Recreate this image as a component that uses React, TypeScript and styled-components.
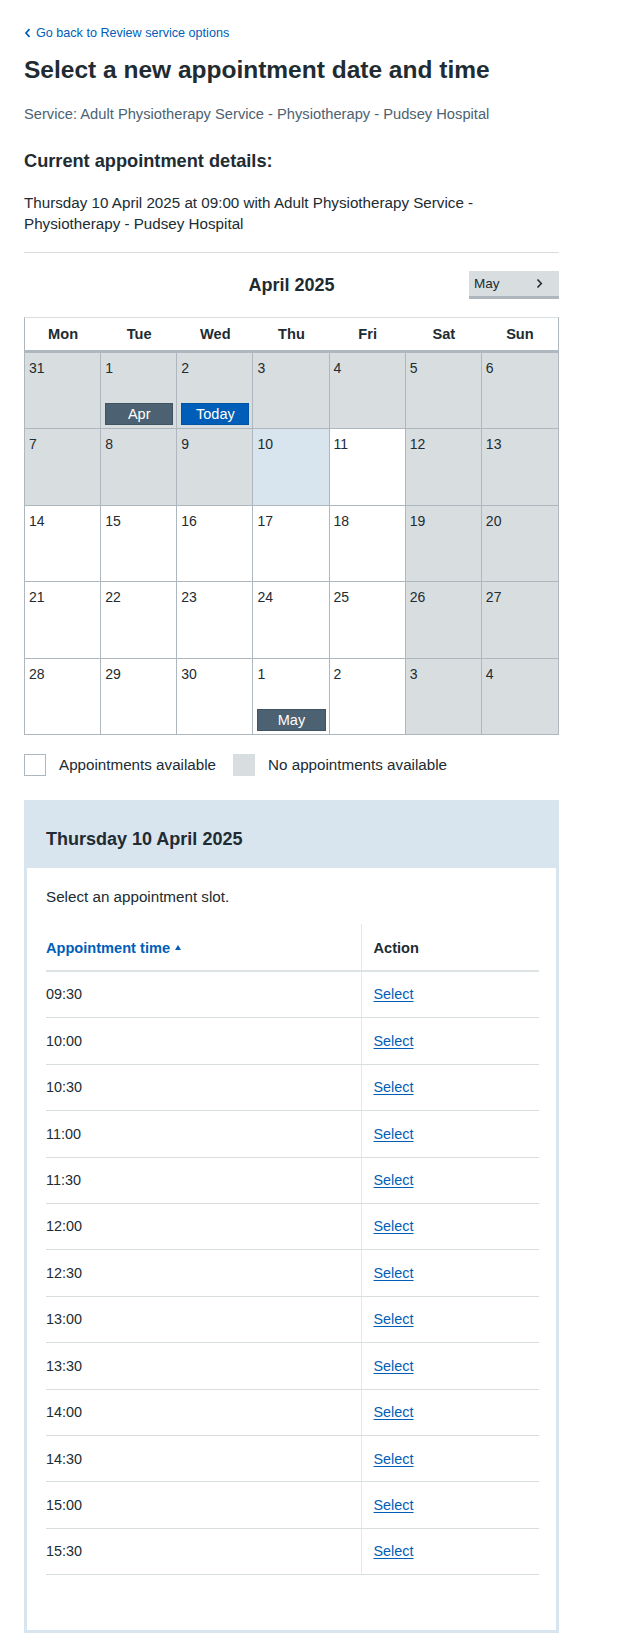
import React from 'react'
import styled, { createGlobalStyle } from 'styled-components'

const GlobalStyle = createGlobalStyle`
	* {
		box-sizing: border-box;
	}

	html,
	body {
		margin: 0;
		padding: 0;
		background: #fff;
	}

	body {
		font-family: 'Liberation Sans', Arial, sans-serif;
		color: #212b32;
	}
`

const Page = styled.main`
	padding: 23px 24px 40px;
`

const Content = styled.div`
	max-width: 535px;
`

const BackLink = styled.a`
	display: inline-flex;
	align-items: center;
	gap: 4px;
	font-size: 12.6px;
	line-height: 20px;
	color: #005eb8;
	text-decoration: none;

	svg {
		display: block;
	}
`

const Title = styled.h1`
	margin: 11px 0 0;
	font-size: 24.5px;
	line-height: 32px;
	font-weight: 700;
`

const ServiceText = styled.p`
	margin: 17px 0 0;
	font-size: 14.7px;
	line-height: 22px;
	color: #4c6272;
`

const SubHeading = styled.h2`
	margin: 23px 0 0;
	font-size: 18.2px;
	line-height: 26px;
	font-weight: 700;
`

const Details = styled.p`
	margin: 17.5px 0 0;
	font-size: 15.2px;
	line-height: 21px;
`

const Divider = styled.hr`
	margin: 18.5px 0 0;
	border: 0;
	border-top: 1px solid #d8dde0;
`

const MonthNav = styled.div`
	margin-top: 18px;
	display: grid;
	grid-template-columns: 1fr auto 1fr;
	align-items: center;
	height: 28px;
`

const MonthTitle = styled.h2`
	grid-column: 2;
	margin: 0;
	font-size: 18px;
	line-height: 24px;
	font-weight: 700;
`

const MonthButton = styled.button`
	grid-column: 3;
	justify-self: end;
	width: 90px;
	height: 28px;
	display: flex;
	align-items: center;
	justify-content: space-between;
	padding: 0 16px 0 5px;
	border: 0;
	border-bottom: 3px solid #aeb7bd;
	background: #d8dde0;
	font-family: inherit;
	font-size: 13.5px;
	color: #212b32;
	cursor: pointer;
`

const CalendarGrid = styled.div`
	margin-top: 18px;
	display: grid;
	grid-template-columns: repeat(7, 1fr);
	border: 1px solid #aeb7bd;
	border-top-color: #d8dde0;
	border-bottom: 0;
`

const DayName = styled.div`
	height: 35px;
	display: flex;
	align-items: center;
	justify-content: center;
	border-bottom: 3px solid #aeb7bd;
	font-size: 14.6px;
	font-weight: 700;
`

type CellKind = 'closed' | 'open' | 'selected'

const cellColours: Record<CellKind, string> = {
	closed: '#d8dde0',
	open: '#ffffff',
	selected: '#d8e4ee',
}

const DayCell = styled.div<{ $kind: CellKind; $lastCol: boolean }>`
	height: 76.4px;
	display: flex;
	flex-direction: column;
	padding: 5px 3px 3px 4px;
	background: ${(p) => cellColours[p.$kind]};
	border-bottom: 1px solid #aeb7bd;
	border-right: ${(p) => (p.$lastCol ? '0' : '1px solid #aeb7bd')};
	font-size: 14px;
	line-height: 20px;
`

const Badge = styled.span<{ $today?: boolean }>`
	margin-top: auto;
	height: 22px;
	border: 1px solid ${(p) => (p.$today ? '#0052a3' : '#3f5361')};
	background: ${(p) => (p.$today ? '#005eb8' : '#4c6272')};
	color: #fff;
	font-size: 14.5px;
	line-height: 20px;
	text-align: center;
`

const Legend = styled.div`
	margin-top: 19px;
	display: flex;
	align-items: center;
	gap: 17px;
`

const LegendItem = styled.div`
	display: flex;
	align-items: center;
	gap: 13px;
	font-size: 15.2px;
	line-height: 22px;
`

const Swatch = styled.span<{ $grey?: boolean }>`
	width: 22px;
	height: 22px;
	border: 1px solid ${(p) => (p.$grey ? '#d8dde0' : '#aeb7bd')};
	background: ${(p) => (p.$grey ? '#d8dde0' : '#fff')};
`

const Panel = styled.section`
	margin-top: 24px;
	border: 3px solid #d8e4ee;
`

const PanelHeader = styled.div`
	background: #d8e4ee;
	padding: 24px 16px 17px 19px;
`

const PanelTitle = styled.h3`
	margin: 0;
	font-size: 18px;
	line-height: 24px;
	font-weight: 700;
`

const PanelBody = styled.div`
	padding: 18px 17px 55px 19px;
`

const Hint = styled.p`
	margin: 0;
	font-size: 15.2px;
	line-height: 22px;
`

const SlotTable = styled.table`
	margin-top: 16px;
	width: 100%;
	border-collapse: separate;
	border-spacing: 0;

	th,
	td {
		padding: 0;
		text-align: left;
		vertical-align: middle;
	}

	th {
		padding: 13px 0 11px;
		line-height: 22px;
		font-size: 14.6px;
		font-weight: 700;
		border-bottom: 2px solid #dde2e5;
	}

	td {
		padding: 11.5px 0;
		line-height: 22.4px;
		font-size: 14.4px;
		border-bottom: 1px solid #d8dde0;
	}

	th:first-child,
	td:first-child {
		width: 64%;
		border-right: 1px solid #e4e8ea;
	}

	th:last-child,
	td:last-child {
		padding-left: 12px;
	}
`

const SortLink = styled.a`
	color: #005eb8;
	text-decoration: none;

	svg {
		margin-left: 5px;
		vertical-align: 3px;
	}
`

const SelectLink = styled.a`
	color: #005eb8;
	text-decoration: underline;
	text-underline-offset: 2px;
`

type Day = { n: number; kind: CellKind; badge?: 'Apr' | 'Today' | 'May' }

const c = (n: number, badge?: Day['badge']): Day => ({ n, kind: 'closed', badge })
const o = (n: number, badge?: Day['badge']): Day => ({ n, kind: 'open', badge })

const weeks: Day[][] = [
	[c(31), c(1, 'Apr'), c(2, 'Today'), c(3), c(4), c(5), c(6)],
	[c(7), c(8), c(9), { n: 10, kind: 'selected' }, o(11), c(12), c(13)],
	[o(14), o(15), o(16), o(17), o(18), c(19), c(20)],
	[o(21), o(22), o(23), o(24), o(25), c(26), c(27)],
	[o(28), o(29), o(30), o(1, 'May'), o(2), c(3), c(4)],
]

const dayNames = ['Mon', 'Tue', 'Wed', 'Thu', 'Fri', 'Sat', 'Sun']

const times = [
	'09:30', '10:00', '10:30', '11:00', '11:30', '12:00', '12:30',
	'13:00', '13:30', '14:00', '14:30', '15:00', '15:30',
]

export default function App() {
	return (
		<>
			<GlobalStyle />
			<Page>
				<Content>
					<BackLink href='#'>
						<svg width='8' height='10' viewBox='0 0 8 10'>
							<path d='M5.5 1.2 L2 5 L5.5 8.8' fill='none' stroke='#005eb8' strokeWidth='1.7' />
						</svg>
						Go back to Review service options
					</BackLink>

					<Title>Select a new appointment date and time</Title>
					<ServiceText>
						Service: Adult Physiotherapy Service - Physiotherapy - Pudsey Hospital
					</ServiceText>

					<SubHeading>Current appointment details:</SubHeading>
					<Details>
						Thursday 10 April 2025 at 09:00 with Adult Physiotherapy Service -
						Physiotherapy - Pudsey Hospital
					</Details>

					<Divider />

					<MonthNav>
						<MonthTitle>April 2025</MonthTitle>
						<MonthButton type='button'>
							<span>May</span>
							<svg width='7' height='11' viewBox='0 0 7 11'>
								<path d='M1.5 1.5 L5.3 5.5 L1.5 9.5' fill='none' stroke='#212b32' strokeWidth='1.6' />
							</svg>
						</MonthButton>
					</MonthNav>

					<CalendarGrid>
						{dayNames.map((d) => (
							<DayName key={d}>{d}</DayName>
						))}
						{weeks.map((week, wi) =>
							week.map((day, di) => (
								<DayCell key={`${wi}-${di}`} $kind={day.kind} $lastCol={di === 6}>
									<span>{day.n}</span>
									{day.badge && <Badge $today={day.badge === 'Today'}>{day.badge}</Badge>}
								</DayCell>
							)),
						)}
					</CalendarGrid>

					<Legend>
						<LegendItem>
							<Swatch />
							Appointments available
						</LegendItem>
						<LegendItem>
							<Swatch $grey />
							No appointments available
						</LegendItem>
					</Legend>

					<Panel>
						<PanelHeader>
							<PanelTitle>Thursday 10 April 2025</PanelTitle>
						</PanelHeader>
						<PanelBody>
							<Hint>Select an appointment slot.</Hint>
							<SlotTable>
								<thead>
									<tr>
										<th>
											<SortLink href='#'>
												Appointment time
												<svg width='6' height='5' viewBox='0 0 6 5'>
													<path d='M3 0 L6 5 L0 5 Z' fill='#005eb8' />
												</svg>
											</SortLink>
										</th>
										<th>Action</th>
									</tr>
								</thead>
								<tbody>
									{times.map((t) => (
										<tr key={t}>
											<td>{t}</td>
											<td>
												<SelectLink href='#'>Select</SelectLink>
											</td>
										</tr>
									))}
								</tbody>
							</SlotTable>
						</PanelBody>
					</Panel>
				</Content>
			</Page>
		</>
	)
}
